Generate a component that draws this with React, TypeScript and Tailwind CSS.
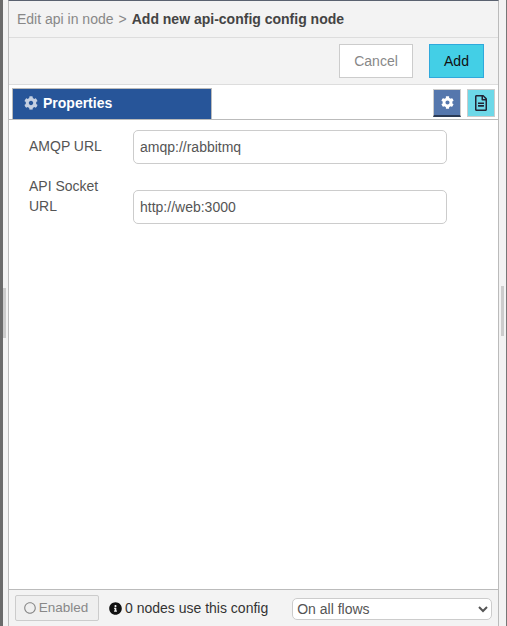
import { FaCog, FaInfoCircle, FaRegFileAlt, FaRegCircle } from 'react-icons/fa';

const font = { fontFamily: '"Liberation Sans", Arial, sans-serif' };

function Field({ label, value, tall }: { label: string; value: string; tall?: boolean }) {
  return (
    <div className={`flex items-start ${tall ? 'mb-0' : 'mb-[12px]'}`}>
      <label className={`w-[104px] ${tall ? 'pt-0' : 'pt-[6px]'} pr-[20px] text-[14px] leading-[20px] text-[#555]`}>{label}</label>
      <input
        readOnly
        value={value}
        className={`w-[314px] h-[34px] ${tall ? 'mt-[14px]' : ''} px-[6px] bg-white border border-[#ccc] rounded-[5px] text-[14px] text-[#555] outline-none`}
      />
    </div>
  );
}

export default function App() {
  return (
    <div style={font} className="w-[507px] h-[626px] overflow-hidden flex bg-[#f3f3f3]">
      <div className="w-[8px] shrink-0 flex items-center bg-[#f3f3f3] border-l-[3px] border-[#6b6b6b]">
        <div className="w-[3px] h-[50px] bg-[#ccc]" />
      </div>
      <div className="w-[491px] shrink-0 flex flex-col border-x border-[#bbb] border-t border-t-[#5a6270] bg-white">
        <div className="h-[37px] shrink-0 flex items-center pl-[8px] bg-[#f3f3f3] border-b border-[#ddd] text-[14px] whitespace-nowrap">
          <span className="text-[#888]">Edit api in node</span>
          <span className="text-[#888] mx-[5px]">&gt;</span>
          <span className="font-bold text-[#444]">Add new api-config config node</span>
        </div>
        <div className="h-[47px] shrink-0 flex items-center justify-end gap-[16px] pr-[14px] bg-[#f3f3f3] border-b border-[#ddd]">
          <button className="w-[74px] h-[34px] bg-white border border-[#ccc] text-[14px] text-[#888]">Cancel</button>
          <button className="w-[55px] h-[34px] bg-[#43cfe6] border border-[#2fa9dc] text-[14px] text-[#111]">Add</button>
        </div>
        <div className="h-[35px] shrink-0 flex items-end px-[3px] border-b border-[#bbb]">
          <div className="w-[200px] h-[31px] flex items-center pl-[11px] pb-[2px] gap-[5px] bg-[#275599] border border-b-0 border-[#bbb] text-[14px] font-bold text-white">
            <FaCog className="text-[#c5d0e2] text-[14px]" />
            Properties
          </div>
          <div className="ml-auto flex gap-[6px] mb-[2px]">
            <div className="w-[28px] h-[28px] flex items-center justify-center bg-[#5577ad] border border-[#ccc] border-b-[2px] border-b-[#2a3a55] text-white text-[13px]">
              <FaCog />
            </div>
            <div className="w-[28px] h-[28px] flex items-center justify-center bg-[#6dd8e8] border border-[#ccc] text-[#223] text-[16px]">
              <FaRegFileAlt />
            </div>
          </div>
        </div>
        <div className="flex-1 pt-[10px] pl-[20px]">
          <Field label="AMQP URL" value="amqp://rabbitmq" />
          <Field label="API Socket URL" value="http://web:3000" tall />
        </div>
        <div className="h-[37px] shrink-0 flex items-center pl-[6px] bg-[#f3f3f3] border-t border-[#bbb]">
          <button className="w-[84px] h-[26px] flex items-center justify-center gap-[3px] pr-[2px] bg-[#efefef] border border-[#ccc] rounded-[2px] text-[13.5px] text-[#888]">
            <FaRegCircle className="text-[12px]" />
            Enabled
          </button>
          <FaInfoCircle className="ml-[10px] text-[13px] text-[#111]" />
          <span className="ml-[3px] text-[14px] text-[#333] whitespace-nowrap">0 nodes use this config</span>
          <select className="ml-[24px] w-[200px] h-[22px] mt-[2px] bg-white border border-[#ccc] rounded-[5px] text-[14px] text-[#555] outline-none" defaultValue="all">
            <option value="all">On all flows</option>
          </select>
        </div>
      </div>
      <div className="flex-1 flex items-center bg-[#f3f3f3] border-r border-[#777]">
        <div className="ml-[2px] mb-[4px] w-[3px] h-[50px] bg-[#ccc]" />
      </div>
    </div>
  );
}
